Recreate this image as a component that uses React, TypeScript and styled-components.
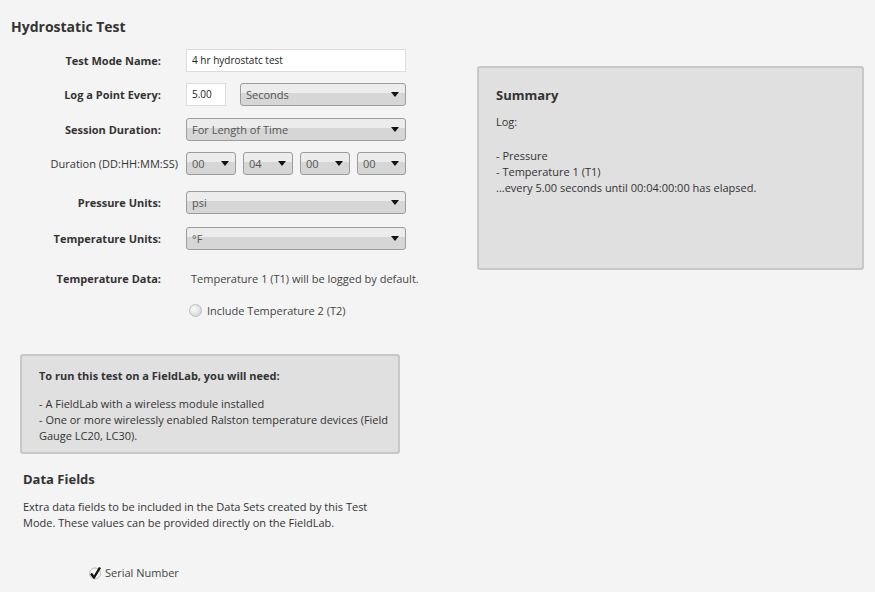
import React from 'react';
import styled, { createGlobalStyle } from 'styled-components';

const GlobalStyle = createGlobalStyle`
  html, body {
    margin: 0;
    padding: 0;
    background: #f4f4f4;
  }
  body {
    font-family: "Open Sans", "Noto Sans", sans-serif;
    color: #333;
  }
`;

const Page = styled.div`
  width: 875px;
  height: 592px;
  overflow: hidden;
  background: #f4f4f4;
`;

const Title = styled.h1`
  margin: 0;
  padding: 17px 0 0 11px;
  font-size: 14px;
  line-height: 20px;
  font-weight: 700;
  color: #333;
`;

const Top = styled.div`
  display: flex;
  align-items: flex-start;
`;

const Form = styled.div`
  width: 406px;
  display: flex;
  flex-direction: column;
  padding-top: 12px;
`;

const Row = styled.div<{ $mb?: number }>`
  display: flex;
  align-items: center;
  gap: 25px;
  min-height: 23px;
  margin-bottom: ${(p) => p.$mb ?? 11}px;
`;

const Label = styled.div<{ $plain?: boolean }>`
  flex: none;
  width: ${(p) => (p.$plain ? 178 : 161)}px;
  margin-right: ${(p) => (p.$plain ? -17 : 0)}px;
  text-align: right;
  font-size: 11px;
  font-weight: ${(p) => (p.$plain ? 400 : 700)};
  color: #333;
  white-space: nowrap;
`;

const Controls = styled.div<{ $gap?: number }>`
  flex: 1;
  display: flex;
  align-items: center;
  gap: ${(p) => p.$gap ?? 14}px;
`;

const TextBox = styled.div<{ $w?: number }>`
  box-sizing: border-box;
  height: 23px;
  width: ${(p) => (p.$w ? `${p.$w}px` : '100%')};
  flex: ${(p) => (p.$w ? 'none' : '1')};
  background: #fff;
  border: 1px solid #dcdcdc;
  padding: 0 5px;
  font-size: 10px;
  line-height: 21px;
  color: #222;
`;

const Select = styled.div<{ $w?: number }>`
  box-sizing: border-box;
  position: relative;
  height: 23px;
  width: ${(p) => (p.$w ? `${p.$w}px` : '100%')};
  flex: ${(p) => (p.$w ? 'none' : '1')};
  border: 1px solid #9c9c9c;
  border-radius: 3px;
  background: linear-gradient(#ececec 0 45%, #d6d6d6 45% 100%);
  padding: 0 5px;
  font-size: 11px;
  line-height: 21px;
  color: #555;
  &::after {
    content: '';
    position: absolute;
    right: 6px;
    top: 8px;
    border-left: 4px solid transparent;
    border-right: 4px solid transparent;
    border-top: 5px solid #111;
  }
`;

const Note = styled.div`
  font-size: 11px;
  color: #444;
  line-height: 16px;
  padding-left: 5px;
  white-space: nowrap;
`;

const Radio = styled.label`
  display: flex;
  align-items: center;
  gap: 5px;
  padding-left: 3px;
  font-size: 11px;
  color: #444;
`;

const RadioDot = styled.span`
  width: 11px;
  height: 11px;
  border-radius: 50%;
  border: 1px solid #bbb;
  background: radial-gradient(circle at 35% 35%, #fafafa, #cfcfcf);
`;

const Summary = styled.div`
  box-sizing: border-box;
  margin: 29px 0 0 71px;
  width: 387px;
  height: 204px;
  background: #e0e0e0;
  border: 2px solid #c8c8c8;
  border-radius: 3px;
  padding: 18px 17px;
`;

const BoxTitle = styled.div<{ $size?: number }>`
  font-size: ${(p) => p.$size ?? 13}px;
  font-weight: 700;
  color: #333;
  line-height: 18px;
`;

const BoxText = styled.div<{ $mt?: number }>`
  margin-top: ${(p) => p.$mt ?? 0}px;
  font-size: 11px;
  line-height: 16px;
  color: #333;
`;

const Info = styled.div`
  box-sizing: border-box;
  margin: 32px 0 0 20px;
  width: 380px;
  height: 100px;
  background: #e0e0e0;
  border: 2px solid #c8c8c8;
  border-radius: 3px;
  padding: 11px 8px 8px 17px;
`;

const Section = styled.div`
  padding: 16px 0 0 23px;
`;

const Para = styled.p`
  margin: 11px 0 0;
  width: 360px;
  font-size: 11px;
  line-height: 16px;
  color: #333;
`;

const Check = styled.label`
  display: flex;
  align-items: center;
  gap: 3px;
  margin: 34px 0 0 65px;
  font-size: 11px;
  color: #444;
`;

const dur = ['00', '04', '00', '00'];

export default function App() {
  return (
    <Page>
      <GlobalStyle />
      <Title>Hydrostatic Test</Title>
      <Top>
        <Form>
          <Row>
            <Label>Test Mode Name:</Label>
            <Controls>
              <TextBox>4 hr hydrostatc test</TextBox>
            </Controls>
          </Row>

          <Row $mb={12}>
            <Label>Log a Point Every:</Label>
            <Controls>
              <TextBox $w={40}>5.00</TextBox>
              <Select>Seconds</Select>
            </Controls>
          </Row>

          <Row>
            <Label>Session Duration:</Label>
            <Controls>
              <Select>For Length of Time</Select>
            </Controls>
          </Row>

          <Row $mb={16}>
            <Label $plain>Duration (DD:HH:MM:SS)</Label>
            <Controls $gap={7}>
              {dur.map((d, i) => (
                <Select key={i} $w={i === 3 ? 49 : 50}>{d}</Select>
              ))}
            </Controls>
          </Row>

          <Row $mb={13}>
            <Label>Pressure Units:</Label>
            <Controls>
              <Select>psi</Select>
            </Controls>
          </Row>

          <Row $mb={17}>
            <Label>Temperature Units:</Label>
            <Controls>
              <Select>°F</Select>
            </Controls>
          </Row>

          <Row $mb={9}>
            <Label>Temperature Data:</Label>
            <Controls>
              <Note>Temperature 1 (T1) will be logged by default.</Note>
            </Controls>
          </Row>

          <Row $mb={0}>
            <Label />
            <Controls>
              <Radio>
                <RadioDot />
                Include Temperature 2 (T2)
              </Radio>
            </Controls>
          </Row>
        </Form>

        <Summary>
          <BoxTitle>Summary</BoxTitle>
          <BoxText $mt={10}>Log:</BoxText>
          <BoxText $mt={18}>
            - Pressure
            <br />- Temperature 1 (T1)
            <br />...every 5.00 seconds until 00:04:00:00 has elapsed.
          </BoxText>
        </Summary>
      </Top>

      <Info>
        <BoxTitle $size={11}>To run this test on a FieldLab, you will need:</BoxTitle>
        <BoxText $mt={11}>
          - A FieldLab with a wireless module installed
          <br />- One or more wirelessly enabled Ralston temperature devices (Field Gauge LC20, LC30).
        </BoxText>
      </Info>

      <Section>
        <BoxTitle>Data Fields</BoxTitle>
        <Para>
          Extra data fields to be included in the Data Sets created by this Test Mode. These values can be provided directly on the FieldLab.
        </Para>
        <Check>
          <svg width="14" height="14" viewBox="0 0 14 14">
            <circle cx="7" cy="7.5" r="5.5" fill="none" stroke="#bbb" strokeWidth="1" />
            <path d="M3 7.5 L6 11.5 L12 1.5" fill="none" stroke="#111" strokeWidth="2.4" strokeLinejoin="round" />
          </svg>
          Serial Number
        </Check>
      </Section>
    </Page>
  );
}
